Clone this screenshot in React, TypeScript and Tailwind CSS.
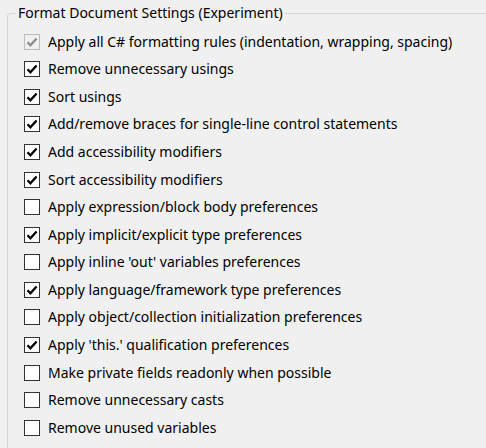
const items: { label: string; checked: boolean; disabled?: boolean }[] = [
  { label: "Apply all C# formatting rules (indentation, wrapping, spacing)", checked: true, disabled: true },
  { label: "Remove unnecessary usings", checked: true },
  { label: "Sort usings", checked: true },
  { label: "Add/remove braces for single-line control statements", checked: true },
  { label: "Add accessibility modifiers", checked: true },
  { label: "Sort accessibility modifiers", checked: true },
  { label: "Apply expression/block body preferences", checked: false },
  { label: "Apply implicit/explicit type preferences", checked: true },
  { label: "Apply inline 'out' variables preferences", checked: false },
  { label: "Apply language/framework type preferences", checked: true },
  { label: "Apply object/collection initialization preferences", checked: false },
  { label: "Apply 'this.' qualification preferences", checked: true },
  { label: "Make private fields readonly when possible", checked: false },
  { label: "Remove unnecessary casts", checked: false },
  { label: "Remove unused variables", checked: false },
];

const CheckBox = ({ checked, disabled }: { checked: boolean; disabled?: boolean }) => (
  <div
    className={
      disabled
        ? "w-[16px] h-[16px] border border-[#bcbcbc] bg-[#f0f0f0] flex items-center justify-center shrink-0"
        : "w-[16px] h-[16px] border border-[#333333] bg-white flex items-center justify-center shrink-0"
    }
  >
    {checked && (
      <svg width="14" height="14" viewBox="0 0 14 14">
        <path
          d="M2.5 7.2 L5.4 10.2 L11.6 3.4"
          fill="none"
          stroke={disabled ? "#8c8c8c" : "#000000"}
          strokeWidth="2.3"
          strokeLinejoin="miter"
        />
      </svg>
    )}
  </div>
);

const App = () => {
  return (
    <div className="w-[486px] h-[448px] bg-[#f0f0f0] overflow-hidden font-['Noto_Sans',sans-serif] text-[14px] text-black">
      <fieldset className="ml-[7px] mt-[3px] border-l border-t border-[#d5d5d5] rounded-tl-[4px] pl-[8px] h-[460px]">
        <legend className="px-[2px] leading-[20px]">Format Document Settings (Experiment)</legend>
        <div className="pl-[8px] mt-[5px] flex flex-col">
          {items.map((it) => (
            <div key={it.label} className="h-[27.57px] flex items-center gap-[8px]">
              <CheckBox checked={it.checked} disabled={it.disabled} />
              <span className="whitespace-nowrap leading-[20px]">{it.label}</span>
            </div>
          ))}
        </div>
      </fieldset>
    </div>
  );
};

export default App;
